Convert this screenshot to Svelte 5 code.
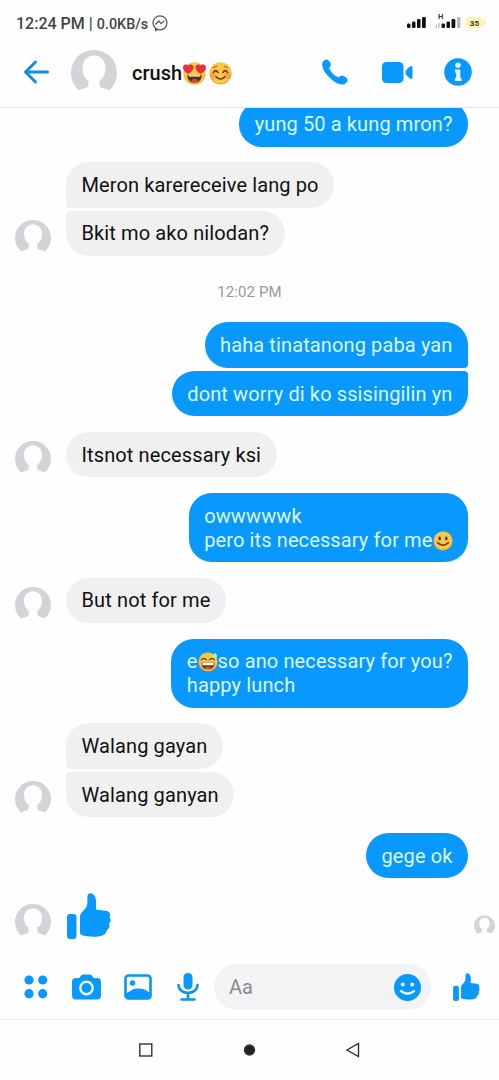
<script>
    const groups = [
        { mine: true, messages: [{ lines: [["yung 50 a kung mron?"]] }] },
        {
            mine: false,
            messages: [
                { lines: [["Meron karereceive lang po"]] },
                { lines: [["Bkit mo ako nilodan?"]] },
            ],
        },
        { time: "12:02 PM" },
        {
            mine: true,
            messages: [
                { lines: [["haha tinatanong paba yan"]] },
                { lines: [["dont worry di ko ssisingilin yn"]] },
            ],
        },
        { mine: false, messages: [{ lines: [["Itsnot necessary ksi"]] }] },
        {
            mine: true,
            messages: [
                {
                    lines: [
                        ["owwwwwk"],
                        ["pero its necessary for me", { emoji: "smile" }],
                    ],
                },
            ],
        },
        { mine: false, messages: [{ lines: [["But not for me"]] }] },
        {
            mine: true,
            messages: [
                {
                    lines: [
                        [
                            "e",
                            { emoji: "sweat" },
                            "so ano necessary for you?",
                        ],
                        ["happy lunch"],
                    ],
                },
            ],
        },
        {
            mine: false,
            messages: [
                { lines: [["Walang gayan"]] },
                { lines: [["Walang ganyan"]] },
            ],
        },
        { mine: true, messages: [{ lines: [["gege ok"]] }] },
        { mine: false, like: true },
    ];
</script>

{#snippet avatar(size)}
    <svg class="avatar {size}" viewBox="0 0 46 41">
        <path
            d="M8 40.500C3 36 0 30 0 22.500A23 22.500 0 0 1 46 22.500C46 30 43 36 38 40.500C36.500 39 34 38.500 31.500 38C29.500 37.500 28.500 36 28.500 34V30.500C32 28.500 34.500 24 34.500 18C34.500 10 29 5.500 23 5.500S11.500 10 11.500 18C11.500 24 14 28.500 17.500 30.500V34C17.500 36 16.500 37.500 14.500 38C12 38.500 9.500 39 8 40.500Z"
        />
    </svg>
{/snippet}

{#snippet thumb()}
    <svg class="thumb" viewBox="0 0 44 46">
        <rect x="0" y="21" width="9.500" height="25" rx="3" />
        <path
            d="M13 24C13 20.500 15 19 17.500 16.500C21.500 12.500 20 8 20.500 3C21 -.3 24.500 -.5 27 2C29.500 5 29.500 11 28.800 16.500C33 17.500 36 17 40 18C43 19 44 21.500 42.500 24C44.200 26 44 29 42 30.500C43 33.500 42 36 40 37C39 41 36 43 31 43.500C25 44 18.500 43.500 14.500 42Q13 41.500 13 40Z"
        />
    </svg>
{/snippet}

{#snippet emoji(name)}
    <svg class="emoji" viewBox="0 0 24 24">
        <circle cx="12" cy="12" r="11.500" fill="#f5a62b" />
        <circle cx="12" cy="11.300" r="10.800" fill="#fcc947" />
        {#if name === "hearts"}
            <path d="M4.500 13.500H19.500C19.500 19 16 21.500 12 21.500S4.500 19 4.500 13.500Z" fill="#5b2c16" />
            <path d="M6 13.800H18V15.200H6Z" fill="#fff" />
            <path d="M8 19Q12 16.500 16 19Q12 23 8 19Z" fill="#e8414d" />
            <path
                d="M5.500 12.500C1 10-.8 7 .3 4.300C1.300 2 4.500 2 5.500 4C7 1.500 10.500 2.300 11 5C11.400 8 8.500 10.500 5.500 12.500Z"
                fill="#eb2f43"
            />
            <path
                d="M18.500 12.500C23 10 24.800 7 23.700 4.300C22.700 2 19.500 2 18.500 4C17 1.500 13.500 2.300 13 5C12.600 8 15.500 10.500 18.500 12.500Z"
                fill="#eb2f43"
            />
        {:else if name === "blush"}
            <circle cx="4.500" cy="14" r="3.300" fill="#f78b45" opacity=".6" />
            <circle cx="19.500" cy="14" r="3.300" fill="#f78b45" opacity=".6" />
            <g fill="none" stroke="#6a3b1a" stroke-width="1.600" stroke-linecap="round">
                <path d="M4.500 11Q7 7 9.500 11M14.500 11Q17 7 19.500 11M7.500 15.500Q12 20 16.500 15.500" />
                <path d="M4.500 6L8 4.500M16 4.500L19.500 6" stroke-width=".8" />
            </g>
        {:else if name === "smile"}
            <ellipse cx="8" cy="9" rx="1.500" ry="2.400" fill="#553319" />
            <ellipse cx="16" cy="9" rx="1.500" ry="2.400" fill="#553319" />
            <path
                d="M5.500 14Q12 20.500 18.500 14"
                fill="none"
                stroke="#6a3b1a"
                stroke-width="1.900"
                stroke-linecap="round"
            />
        {:else}
            <path
                d="M4 9.500Q7 5.500 10 9.500M13.500 9.500Q16.500 5.500 19.500 9.500"
                fill="none"
                stroke="#5b3519"
                stroke-width="1.500"
                stroke-linecap="round"
            />
            <path d="M4 12.500H20C20 18 17 20.800 12 20.800S4 18 4 12.500Z" fill="#6b3420" />
            <path d="M5 13H19L18.500 16H5.500Z" fill="#fff" />
            <path d="M7.500 19Q12 16.500 16.500 19Q12 22 7.500 19Z" fill="#df493e" />
            <path d="M20.500 .5C18.500 3.500 17.800 5 19 6.500C20.500 8 23 7 23 5C23 3.500 21.500 2 20.500 .5Z" fill="#a8ecff" />
        {/if}
    </svg>
{/snippet}

<div class="screen">
    <div class="status">
        <span class="clock">12:24 PM | <small>0.0KB/s</small></span>
        <svg class="messenger" viewBox="0 0 16 16">
            <circle cx="8" cy="7.800" r="7" />
            <path d="M3.500 9.500L6.800 6L9 8.500L12.500 6M3.500 13V15.500L6 14.500" />
        </svg>
        <svg class="indicators" viewBox="0 0 92 22">
            <g fill="#111">
                <rect x="7" y="13.500" width="3.500" height="4.500" rx="1.200" />
                <rect x="12" y="11.500" width="3.500" height="6.500" rx="1.200" />
                <rect x="17" y="9" width="3.500" height="9" rx="1.200" />
                <rect x="22" y="7" width="3.800" height="11" rx="1.200" />
                <rect x="41.500" y="13.500" width="3.500" height="4.500" rx="1.200" />
                <rect x="46.500" y="11.500" width="3.500" height="6.500" rx="1.200" />
                <rect x="51.500" y="9" width="3.800" height="9" rx="1.200" />
            </g>
            <rect x="57" y="7" width="3.500" height="11" rx="1" fill="#b9b9b9" />
            <path d="M36.500 15V18M39 18V13" stroke="#aaa" stroke-width="1" />
            <rect x="66" y="7" width="17" height="11" rx="4" fill="#fff3b0" />
            <rect x="83.500" y="10" width="2" height="5" rx="1" fill="#f5e7a2" />
            <text x="38" y="8.500" font-size="7.500">H</text>
            <text x="69.800" y="15.500" font-size="8">35</text>
        </svg>
    </div>

    <header>
        <svg class="back" viewBox="0 0 26 24">
            <path d="M12.500 2L2.500 12L12.500 22M3 12H24.500" />
        </svg>
        {@render avatar("large")}
        <h1>crush{@render emoji("hearts")}{@render emoji("blush")}</h1>
        <svg class="phone" viewBox="0 0 26 26">
            <path
                d="M1 2.500C3 0 5.500-.5 7.500 2.500C9.500 5.500 9 7 7 9C9 13.500 12 16.500 16.500 18.500C18.500 16.500 21 16 24 18.500C26.500 20.500 26 22 23.500 24.500C20 27 13.500 24.500 7.500 18.500C1.500 12.500-1.500 6 1 2.500Z"
            />
        </svg>
        <svg class="video" viewBox="0 0 31 21">
            <rect width="21.500" height="21" rx="4.500" />
            <path d="M23.500 9Q27 4.500 29.500 4Q30.500 4 30.500 5V16Q30.500 17 29.500 17Q27 16.500 23.500 12Z" />
        </svg>
        <svg class="info" viewBox="0 0 28 28">
            <circle cx="14" cy="14" r="13.800" />
            <circle cx="14" cy="7.300" r="2.700" fill="#e9fbff" />
            <path d="M11 11.500H16.300V20H17.500V23H11V20H12.200V14.500H11Z" fill="#e9fbff" />
        </svg>
    </header>

    <main>
        {#each groups as group}
            {#if group.time}
                <time>{group.time}</time>
            {:else}
                <div class="group" class:mine={group.mine}>
                    {#if !group.mine}
                        {@render avatar("small")}
                    {/if}
                    {#if group.like}
                        {@render thumb()}
                        <span class="seen">{@render avatar("tiny")}</span>
                    {:else}
                        <div class="stack">
                            {#each group.messages as message}
                                <div class="bubble">
                                    {#each message.lines as line}
                                        <div class="line">
                                            {#each line as part}{#if part.emoji}{@render emoji(part.emoji)}{:else}{part}{/if}{/each}
                                        </div>
                                    {/each}
                                </div>
                            {/each}
                        </div>
                    {/if}
                </div>
            {/if}
        {/each}
    </main>

    <footer>
        <svg class="dots" viewBox="0 0 24 24">
            <circle cx="5" cy="5" r="4.600" />
            <circle cx="18.700" cy="5" r="4.600" />
            <circle cx="5" cy="18.700" r="4.600" />
            <circle cx="18.700" cy="18.700" r="4.600" />
        </svg>
        <svg class="camera" viewBox="0 0 29 26">
            <path d="M4 4H7.500Q9 .5 11 .5H18Q20 .5 21.500 4H25Q29 4 29 8V21Q29 25.500 25 25.500H4Q0 25.500 0 21V8Q0 4 4 4Z" />
            <circle cx="14.500" cy="14" r="6.200" fill="none" stroke="#e9fbff" stroke-width="2.400" />
        </svg>
        <svg class="picture" viewBox="0 0 28 26">
            <rect x="1.500" y="1.500" width="25" height="23" rx="3" fill="#f5fdff" stroke="#0c93ee" stroke-width="2.600" />
            <circle cx="8.500" cy="9" r="2.700" />
            <path d="M2 19C6 18 8 14.500 13 14.500C18 14.500 21 15 26 19V24H2Z" />
        </svg>
        <svg class="mic" viewBox="0 0 22 28">
            <rect x="6.500" y="0" width="9" height="16.500" rx="4.500" />
            <path
                d="M1.500 12C2 22.500 20 22.500 20.500 12M11 20V25M4.500 26.500H17.500"
                fill="none"
                stroke="#0c93ee"
                stroke-width="2.600"
                stroke-linecap="round"
            />
        </svg>
        <div class="field">
            <span>Aa</span>
            <svg class="face" viewBox="0 0 27 27">
                <circle cx="13.500" cy="13.500" r="13.500" />
                <circle cx="8.800" cy="10.500" r="2" fill="#e9fbff" />
                <circle cx="18.200" cy="10.500" r="2" fill="#e9fbff" />
                <path
                    d="M7 17Q13.500 22.500 20 17"
                    fill="none"
                    stroke="#e9fbff"
                    stroke-width="2.300"
                    stroke-linecap="round"
                />
            </svg>
        </div>
        {@render thumb()}
    </footer>

    <nav>
        <svg viewBox="0 0 16 16"><rect x="1.800" y="2" width="12" height="12" /></svg>
        <svg viewBox="0 0 16 16"><circle cx="7.500" cy="8" r="5" fill="#222" /></svg>
        <svg viewBox="0 0 16 16"><path d="M13.500 1.500V14.500L2 8Z" /></svg>
    </nav>
</div>

<style>
    :global(body) {
        background: #fff;
    }

    .screen {
        width: 499px;
        height: 1080px;
        display: flex;
        flex-direction: column;
        overflow: hidden;
        background: #fefefe;
        font-family: Roboto, "Liberation Sans", sans-serif;
        color: #111;
    }

    svg {
        display: block;
        flex: none;
        fill: #0998fb;
        overflow: visible;
    }

    .status {
        height: 44px;
        display: flex;
        align-items: center;
        padding: 2px 7px 0 16px;
        box-sizing: border-box;
    }

    .clock {
        font-size: 16px;
        font-weight: 500;
        color: #444;
        white-space: nowrap;
    }

    .clock small {
        font-size: 14.4px;
    }

    .messenger {
        width: 16px;
        height: 16px;
        margin-left: 4px;
        fill: none;
        stroke: #555;
        stroke-width: 1.2;
    }

    .indicators {
        width: 92px;
        height: 22px;
        margin-left: auto;
        margin-bottom: 5px;
        font-weight: 700;
    }

    .indicators text {
        fill: #333;
    }

    header {
        height: 64px;
        display: flex;
        align-items: center;
        padding: 0 27px 7px 23px;
        box-sizing: border-box;
        border-bottom: 1px solid #e3e3e3;
    }

    .back {
        width: 26px;
        height: 24px;
        fill: none;
        stroke: #118eea;
        stroke-width: 3;
        stroke-linecap: round;
        stroke-linejoin: round;
    }

    .avatar {
        fill: #d3d4da;
    }

    .large {
        width: 46px;
        height: 41px;
        margin-left: 22px;
        margin-bottom: 4px;
    }

    h1 {
        flex: 1;
        display: flex;
        align-items: center;
        margin: 2px 0 0 15px;
        font-size: 20px;
        line-height: 24px;
        font-weight: 500;
    }

    .emoji {
        display: inline-block;
        width: 20px;
        height: 20px;
        vertical-align: -4px;
    }

    h1 .emoji {
        width: 23px;
        height: 23px;
        margin-left: 1px;
        margin-right: 1.5px;
    }

    .phone {
        width: 26px;
        height: 26px;
    }

    .video {
        width: 31px;
        height: 21px;
        margin-left: 34px;
    }

    .info {
        width: 28px;
        height: 28px;
        margin-left: 31px;
    }

    main {
        height: 852px;
        display: flex;
        flex-direction: column;
        justify-content: flex-end;
        gap: 15.4px;
        padding: 0 31px 20.3px 15px;
        box-sizing: border-box;
        overflow: hidden;
    }

    .group {
        display: flex;
        align-items: flex-end;
        flex: none;
    }

    .mine {
        justify-content: flex-end;
    }

    .small {
        width: 36px;
        height: 32px;
        margin: 0 15px 4px 0;
    }

    .stack {
        display: flex;
        flex-direction: column;
        align-items: flex-start;
        gap: 3px;
    }

    .mine .stack {
        align-items: flex-end;
    }

    .bubble {
        padding: 10.75px 15.5px;
        border-radius: 22.75px;
        background: #f0f0f1;
        font-size: 20px;
        line-height: 24px;
        letter-spacing: 0.12px;
    }

    .bubble:not(:last-child) {
        border-bottom-left-radius: 4px;
    }

    .bubble:not(:first-child) {
        border-top-left-radius: 4px;
    }

    .mine .bubble {
        background: #0998fe;
        color: #d9f8ff;
    }

    .mine .bubble:not(:last-child) {
        border-bottom-left-radius: 22.75px;
        border-bottom-right-radius: 4px;
    }

    .mine .bubble:not(:first-child) {
        border-top-left-radius: 22.75px;
        border-top-right-radius: 4px;
    }

    .line {
        height: 24px;
        white-space: nowrap;
    }

    time {
        flex: none;
        height: 35.7px;
        line-height: 42px;
        padding-left: 16px;
        text-align: center;
        font-size: 15px;
        letter-spacing: 0.1px;
        color: #999;
    }

    .group .thumb {
        width: 44px;
        height: 46px;
        margin: -1px 0 1px 1px;
    }

    .seen {
        margin: 0 -27px 6px auto;
    }

    .tiny {
        width: 21px;
        height: 19px;
    }

    footer {
        height: 60px;
        display: flex;
        align-items: center;
        padding: 0 19px 6px 24px;
        box-sizing: border-box;
        border-bottom: 1px solid #f0f0f0;
    }

    .dots {
        width: 24px;
        height: 24px;
    }

    .camera {
        width: 29px;
        height: 26px;
        margin-left: 24px;
    }

    .picture {
        width: 28px;
        height: 26px;
        margin-left: 23px;
    }

    .mic {
        width: 22px;
        height: 28px;
        margin-left: 25px;
    }

    .field {
        flex: 1;
        height: 46px;
        display: flex;
        align-items: center;
        justify-content: space-between;
        margin: 0 22px 0 15px;
        padding: 1px 10px 0 15px;
        box-sizing: border-box;
        border-radius: 23px;
        background: #f2f3f5;
        font-size: 20px;
        color: #8b8b8f;
    }

    .face {
        width: 27px;
        height: 27px;
    }

    footer .thumb {
        width: 27px;
        height: 28px;
    }

    nav {
        flex: 1;
        display: flex;
        align-items: center;
        justify-content: space-between;
        padding: 0 138px;
    }

    nav svg {
        width: 16px;
        height: 16px;
        fill: none;
        stroke: #333;
        stroke-width: 1.4;
    }
</style>
